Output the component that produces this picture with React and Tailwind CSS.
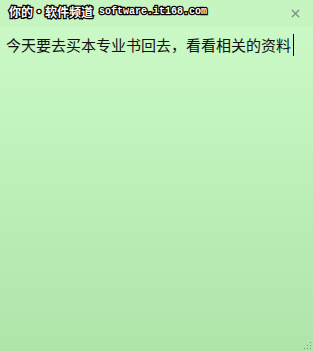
import { X } from 'lucide-react';

export default function App() {
  return (
    <div className="relative w-[313px] h-[351px] overflow-hidden flex flex-col bg-gradient-to-b from-[#cdfbc9] to-[#afe4aa] font-['Noto_Sans_CJK_SC',sans-serif]">
      {/* ── Title bar ── */}
      <div className="h-[27px] shrink-0 flex items-center justify-end pr-[11px] bg-[#c6f5c2]">
        <X size={13} strokeWidth={2.6} className="text-[#7b967a]" />
      </div>

      {/* watermark */}
      <div className="absolute left-[9px] top-[6px] flex items-center gap-[6px] text-white font-bold [-webkit-text-stroke:2.5px_#000] [paint-order:stroke_fill]">
        <span className="text-[12px] leading-none">你的·软件频道</span>
        <span className="text-[10px] leading-none font-['Liberation_Mono',monospace]">software.it168.com</span>
      </div>

      {/* ── Body ── */}
      <div className="flex-1 px-[6px] pt-[7px]">
        <p className="flex items-center text-[15px] leading-[22px] text-[#111]">
          今天要去买本专业书回去，看看相关的资料
          <span className="inline-block w-px h-[22px] bg-black ml-[2px]" />
        </p>
      </div>

      {/* resize grip */}
      <svg className="absolute right-[1px] bottom-[1px]" width="9" height="9" viewBox="0 0 9 9">
        <g fill="#6f9a6b">
          <rect x="7" y="1" width="1" height="1" />
          <rect x="4" y="4" width="1" height="1" />
          <rect x="7" y="4" width="1" height="1" />
          <rect x="1" y="7" width="1" height="1" />
          <rect x="4" y="7" width="1" height="1" />
          <rect x="7" y="7" width="1" height="1" />
        </g>
      </svg>
    </div>
  );
}
